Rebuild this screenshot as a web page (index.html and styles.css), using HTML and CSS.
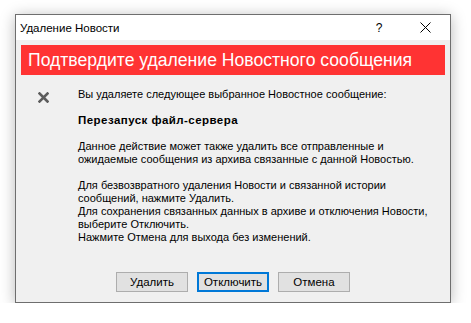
FILE: index.html
```html
<!DOCTYPE html>
<html lang="ru">
<head>
  <meta charset="UTF-8" />
  <meta name="viewport" content="width=device-width, initial-scale=1" />
  <title>Удаление Новости</title>
  <link rel="stylesheet" href="styles.css">
</head>
<body>
  <div class="dialog">
    <div class="titlebar">
      <span class="title">Удаление Новости</span>
      <span class="help">?</span>
      <span class="close">
        <svg width="11" height="11" viewBox="0 0 11 11">
          <path d="M0.5 0.5 L10.5 10.5 M10.5 0.5 L0.5 10.5" stroke="#000" stroke-width="1" fill="none" />
        </svg>
      </span>
    </div>

    <div class="content">
      <div class="banner">Подтвердите удаление Новостного сообщения</div>

      <div class="main">
        <div class="icon">
          <svg width="11" height="11" viewBox="0 0 11 11">
            <path d="M1.5 1.5 L9.5 9.5 M9.5 1.5 L1.5 9.5" stroke="#5c5c5c" stroke-width="2.6" stroke-linecap="square" fill="none" />
          </svg>
        </div>
        <div class="text">
          <p>Вы удаляете следующее выбранное Новостное сообщение:</p>
          <p class="name">Перезапуск файл-сервера</p>
          <p>Данное действие может также удалить все отправленные и<br>ожидаемые сообщения из архива связанные с данной Новостью.</p>
          <p>Для безвозвратного удаления Новости и связанной истории<br>сообщений, нажмите Удалить.<br>Для сохранения связанных данных в архиве и отключения Новости,<br>выберите Отключить.<br>Нажмите Отмена для выхода без изменений.</p>
        </div>
      </div>

      <div class="buttons">
        <button class="btn">Удалить</button>
        <button class="btn default">Отключить</button>
        <button class="btn">Отмена</button>
      </div>
    </div>
  </div>
</body>
</html>
```

FILE: styles.css
```css
body {
  margin: 0;
  background: #ffffff;
  font-family: "Liberation Sans", Arial, sans-serif;
  font-size: 11px;
  color: #000;
}

.dialog {
  margin: 14px 0 0 15px;
  width: 434px;
  height: 287px;
  border: 1px solid #6e6e6e;
  box-shadow: 0 2px 14px rgba(0, 0, 0, 0.28);
  display: flex;
  flex-direction: column;
  background: #f0f0f0;
}

/* --- title bar --- */
.titlebar {
  height: 25px;
  background: #ffffff;
  display: flex;
  align-items: center;
  padding-left: 4px;
  font-size: 11.5px;
}

.title {
  flex: 1;
}

.help {
  width: 46px;
  text-align: center;
  font-size: 12px;
}

.close {
  width: 46px;
  display: flex;
  justify-content: center;
  margin-right: 2px;
}

/* --- content --- */
.content {
  flex: 1;
  display: flex;
  flex-direction: column;
  padding: 5px 5px 10px;
}

.banner {
  height: 30px;
  background: #ff3333;
  color: #ffffff;
  font-size: 17.6px;
  line-height: 30px;
  padding-left: 7px;
}

.main {
  flex: 1;
  display: flex;
  padding-top: 13px;
}

.icon {
  width: 57px;
  padding: 4px 0 0 17px;
  box-sizing: border-box;
}

.text p {
  margin: 0 0 13px;
  line-height: 13px;
  white-space: nowrap;
}

.text .name {
  font-weight: bold;
  font-size: 11.5px;
  letter-spacing: 0.45px;
}

.buttons {
  display: flex;
  justify-content: center;
  gap: 9px;
}

.btn {
  width: 72px;
  height: 20px;
  font-family: inherit;
  font-size: 11.5px;
  background: #e1e1e1;
  border: 1px solid #adadad;
  padding: 0;
  color: #000;
}

.btn.default {
  border: 2px solid #0078d7;
}
```
